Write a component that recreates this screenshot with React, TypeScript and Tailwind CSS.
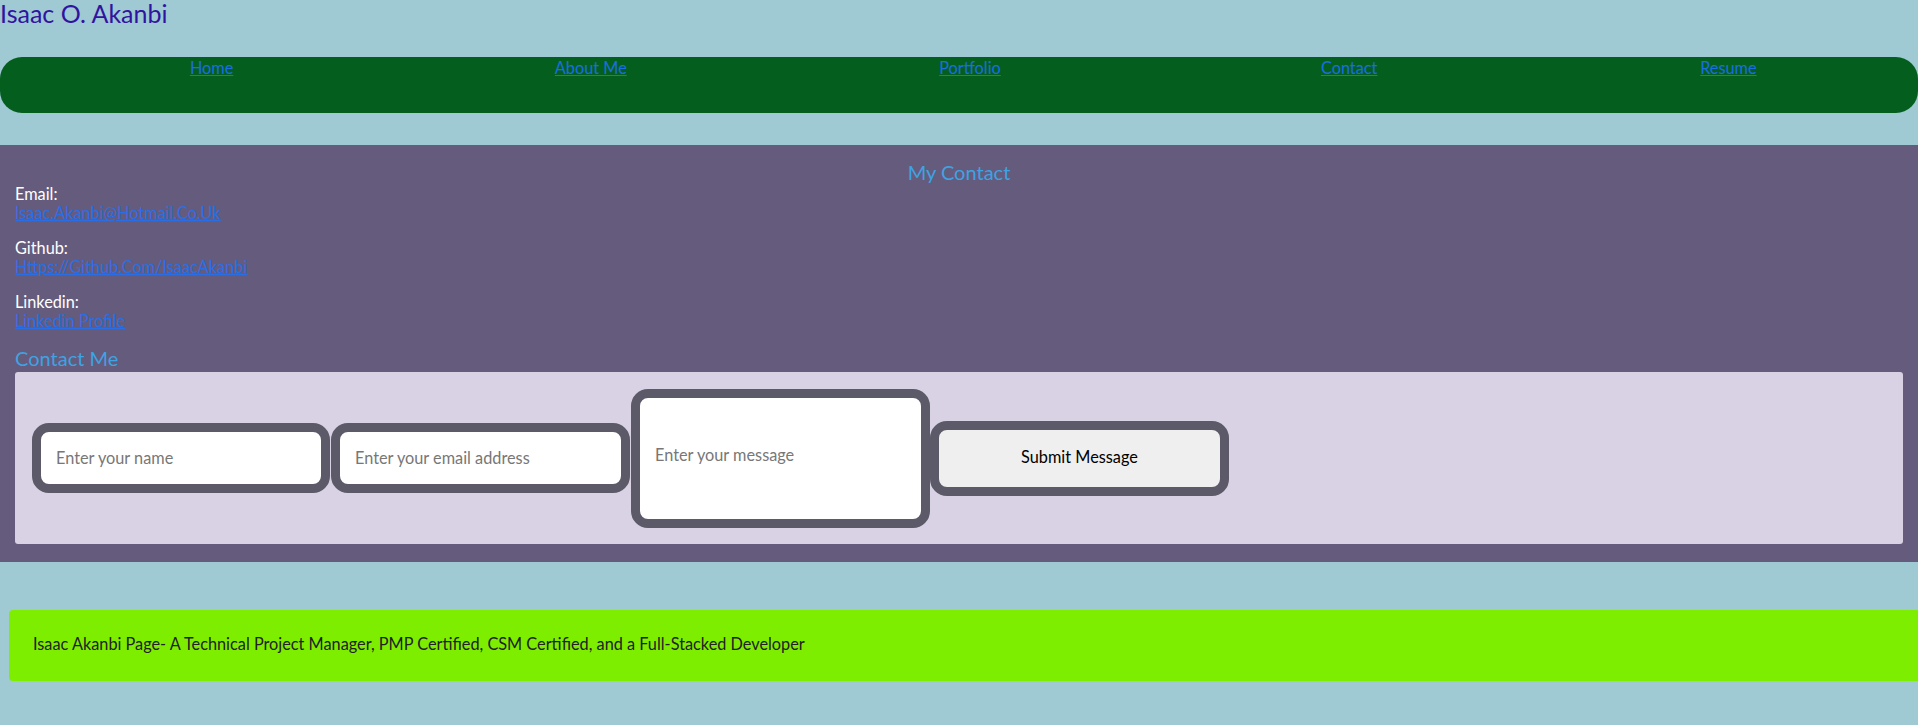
const NAV_LINKS = ['Home', 'About Me', 'Portfolio', 'Contact', 'Resume']

export default function App() {
  return (
    <div className="min-h-[725px] bg-[#9fc9d3] font-['Lato','Liberation_Sans',sans-serif] text-[16.3px]">
      {/* Header */}
      <h1 className="h-[57px] text-[25px] leading-[26px] text-[#3014a0]">Isaac O. Akanbi</h1>

      {/* Nav */}
      <nav className="h-[56px] rounded-[22px] bg-[#045f1f] pl-[22px] pt-[1px]">
        <ul className="grid grid-cols-5">
          {NAV_LINKS.map((link) => (
            <li key={link} className="text-center leading-[19px]">
              <a href="#" className="text-[#1a6ee0] underline">
                {link}
              </a>
            </li>
          ))}
        </ul>
      </nav>

      {/* Contact section */}
      <section className="mt-[32px] h-[417px] bg-[#655b7d] px-[15px] pt-[15px]">
        <h2 className="text-center text-[20px] leading-[24px] text-[#3fa2e2]">My Contact</h2>

        <div className="flex flex-col gap-[16px] capitalize leading-[19px]">
          <div>
            <p className="text-white">Email:</p>
            <a href="#" className="text-[#2a6ee6] underline">isaac.akanbi@hotmail.co.uk</a>
          </div>
          <div>
            <p className="text-white">Github:</p>
            <a href="#" className="text-[#2a6ee6] underline">https://github.com/isaacAkanbi</a>
          </div>
          <div>
            <p className="text-white">Linkedin:</p>
            <a href="#" className="text-[#2a6ee6] underline">linkedin profile</a>
          </div>
        </div>

        <h2 className="mt-[16px] text-[20px] leading-[24px] text-[#3fa2e2]">Contact Me</h2>

        <form className="mt-[2px] flex h-[172px] items-center rounded-[3px] bg-[#d9d1e4] px-[17px]">
          <input
            type="text"
            placeholder="Enter your name"
            className="h-[70px] w-[298px] rounded-[17px] border-[9px] border-[#5c5968] bg-white px-[15px] pb-[2px] text-[#222] placeholder-[#777] outline-none"
          />
          <input
            type="email"
            placeholder="Enter your email address"
            className="ml-[1px] h-[70px] w-[299px] rounded-[17px] border-[9px] border-[#5c5968] bg-white px-[15px] pb-[2px] text-[#222] placeholder-[#777] outline-none"
          />
          <textarea
            placeholder="Enter your message"
            className="ml-[1px] h-[139px] w-[299px] resize-none rounded-[17px] border-[9px] border-[#5c5968] bg-white px-[15px] pt-[45px] text-[#222] placeholder-[#777] outline-none"
          />
          <button
            type="button"
            className="h-[75px] w-[299px] rounded-[17px] border-[9px] border-[#5c5968] bg-[#efefef] pb-[2px] font-normal text-black"
          >
            Submit Message
          </button>
        </form>
      </section>

      {/* Footer */}
      <footer className="ml-[9px] mt-[48px] flex h-[71px] items-center rounded-l-[4px] bg-[#7eee00] pb-[2px] pl-[24px] text-[#222]">
        Isaac Akanbi Page- A Technical Project Manager, PMP Certified, CSM Certified, and a Full-Stacked Developer
      </footer>
    </div>
  )
}
